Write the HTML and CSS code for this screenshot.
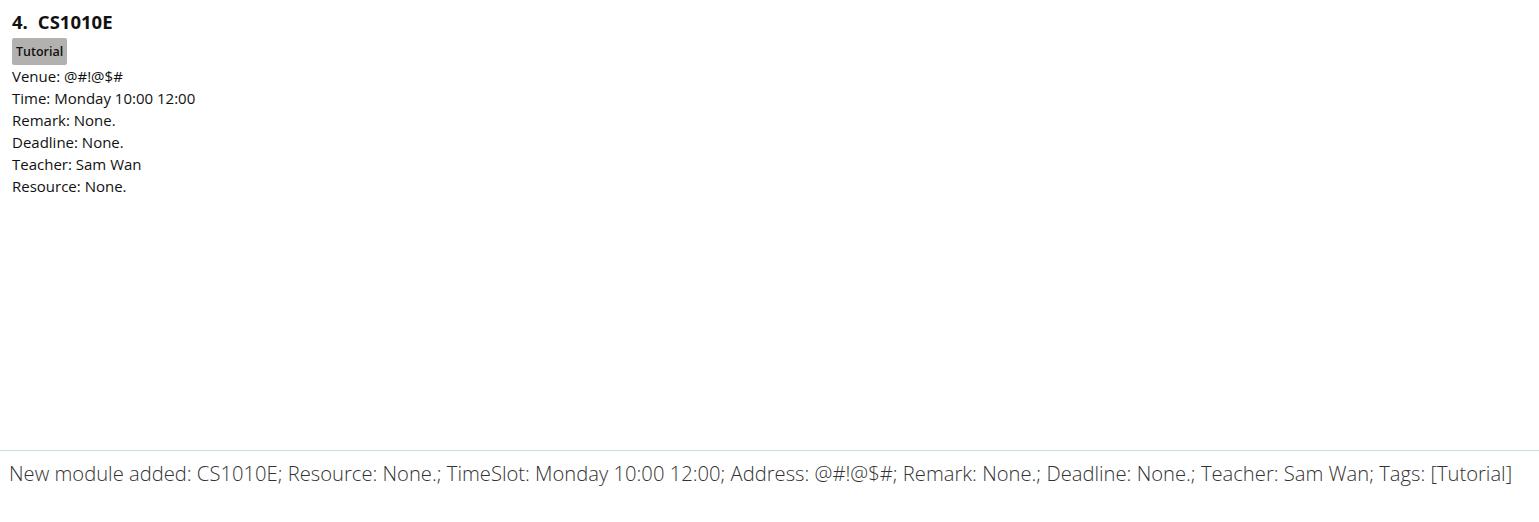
FILE: index.html
```html
<!DOCTYPE html>
<html lang="en">
<head>
<meta charset="utf-8">
<title>Module</title>
<link rel="stylesheet" href="styles.css">
</head>
<body>
<div class="app">
  <section class="list">
    <div class="card">
      <div class="card-title"><span class="index">4.</span><span class="code">CS1010E</span></div>
      <div class="tags"><span class="tag">Tutorial</span></div>
      <div class="field">Venue: @#!@$#</div>
      <div class="field">Time: Monday 10:00 12:00</div>
      <div class="field">Remark: None.</div>
      <div class="field">Deadline: None.</div>
      <div class="field">Teacher: Sam Wan</div>
      <div class="field">Resource: None.</div>
    </div>
  </section>
  <section class="result">
    <div class="result-text">New module added: CS1010E; Resource: None.; TimeSlot: Monday 10:00 12:00; Address: @#!@$#; Remark: None.; Deadline: None.; Teacher: Sam Wan; Tags: [Tutorial]</div>
  </section>
</div>
</body>
</html>
```

FILE: styles.css
```css
html, body {
  margin: 0;
  padding: 0;
  background: #ffffff;
}
body {
  font-family: "Open Sans", "Noto Sans", sans-serif;
  color: #000;
}
.app {
  height: 100vh;
  display: flex;
  flex-direction: column;
}
.list {
  flex: 1;
}
.card {
  padding: 10px 12px;
  display: flex;
  flex-direction: column;
}
.card-title {
  font-size: 18.5px;
  font-weight: 700;
  line-height: 24px;
  color: #111;
  display: flex;
  gap: 10px;
}
.tags {
  display: flex;
  margin-top: 4px;
  margin-bottom: 0;
}
.tag {
  background: #b3b1b0;
  color: #111;
  font-size: 12.5px;
  font-weight: 600;
  padding: 4px;
  line-height: 19px;
  border-radius: 2px;
}
.field {
  font-size: 15px;
  line-height: 22px;
  color: #111;
}
.result {
  height: 72px;
  border-top: 1px solid #c5dfe3;
  box-sizing: border-box;
}
.result-text {
  padding: 8px 9px;
  font-size: 20.2px;
  font-weight: 300;
  line-height: 28px;
  color: #333;
  white-space: nowrap;
}
```
